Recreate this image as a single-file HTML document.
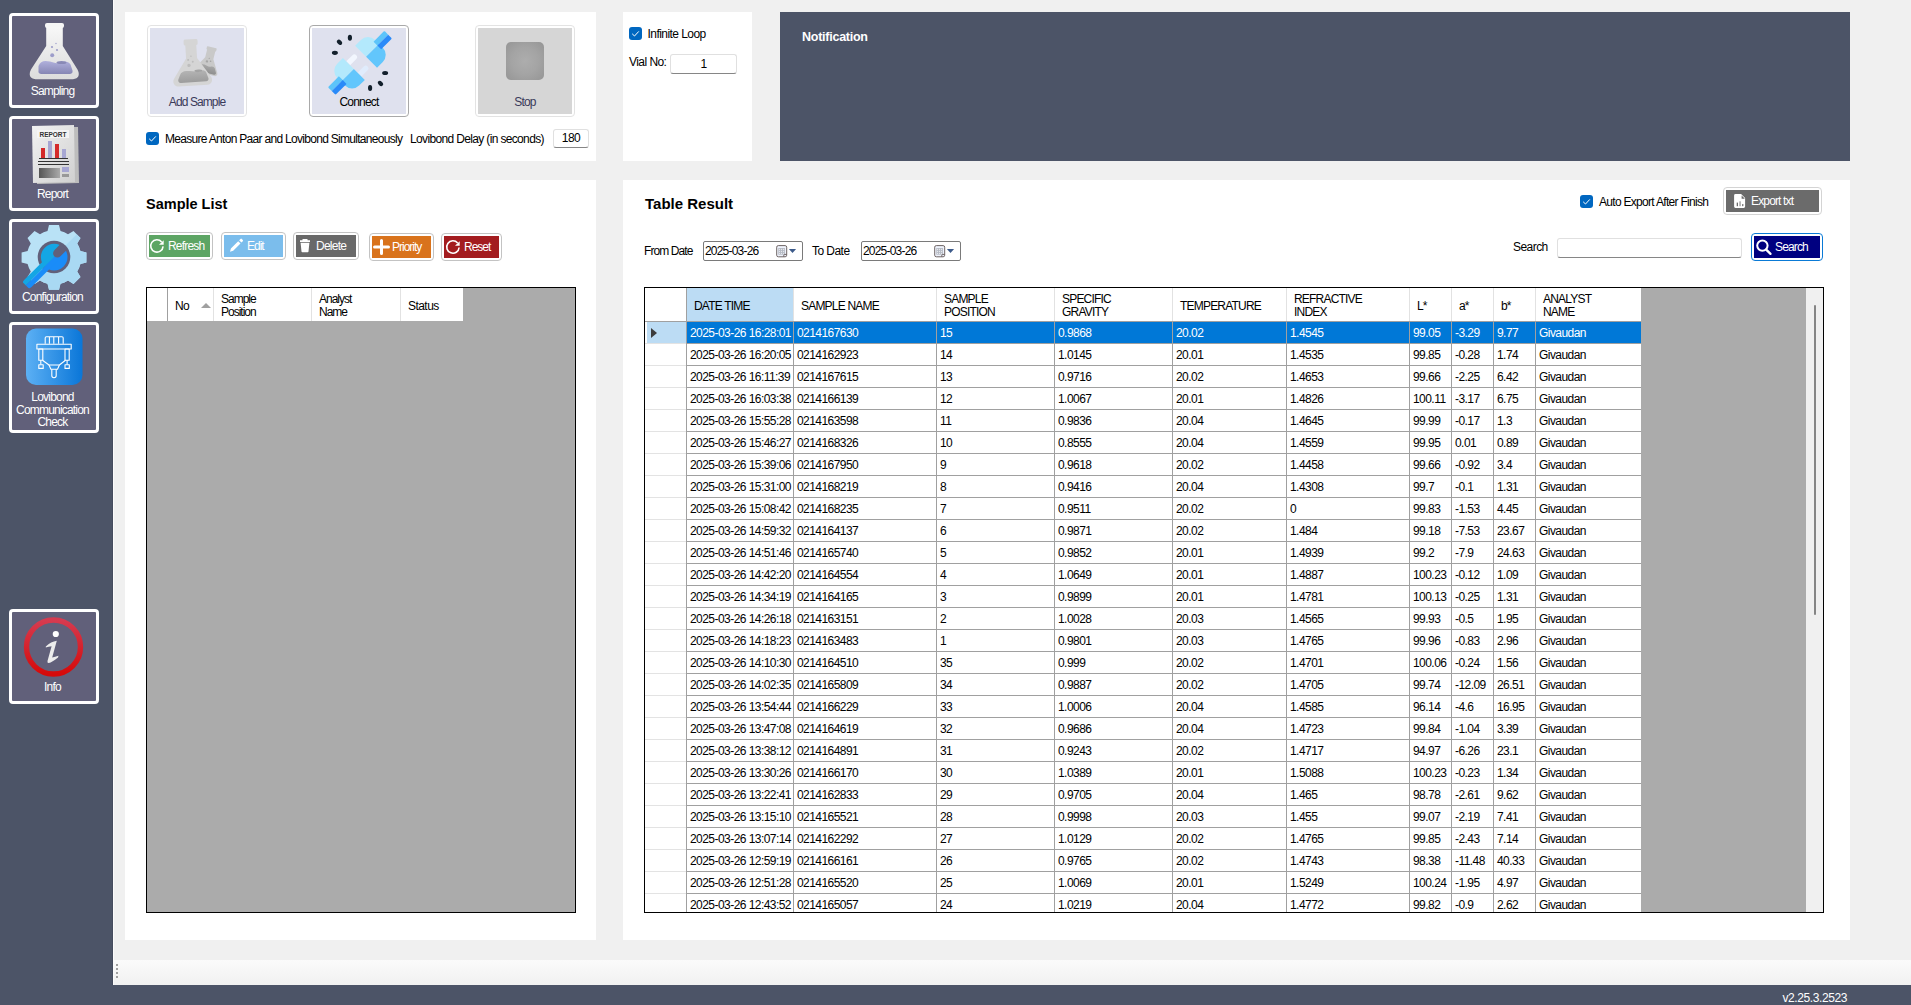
<!DOCTYPE html>
<html><head><meta charset="utf-8">
<style>
*{margin:0;padding:0;box-sizing:content-box}
html,body{width:1911px;height:1005px;overflow:hidden;background:#f0f0f0;font-family:"Liberation Sans",sans-serif;font-size:12px;color:#000}
.a{position:absolute}
.t{font-size:12px;line-height:14px;white-space:nowrap;letter-spacing:-0.55px}
.hd2{line-height:13px}
.sbtn{position:absolute;left:9px;width:84px;border:3px solid #fff;border-radius:4px;background:#61607a}
.sl{position:absolute;left:-1.5px;width:84px;text-align:center;color:#fff;font-size:12px;line-height:13px;letter-spacing:-0.8px;white-space:nowrap}
.panel{position:absolute;background:#fff}
.cb{position:absolute;width:13px;height:13px;background:#0067c0;border-radius:3px}
.cb svg{position:absolute;left:0;top:0}
.bigbtn{position:absolute;border:1px solid #e3e3e3;border-radius:4px;background:#fff}
.bigbtn .in{position:absolute;left:2px;top:2px;right:2px;bottom:2px;background:#dfe1ee}
.cbtn{position:absolute;border:1px solid #c3c3c3;border-radius:4px;background:#fff}
.cbtn .in{position:absolute;left:2px;top:2px;right:2px;bottom:2px}
.wt{color:#fff}
.tb{position:absolute;background:#fff;border:1px solid #e0e0e0;border-bottom:1px solid #868686;border-radius:3px}
</style></head>
<body>
<!-- sidebar -->
<div class="a" style="left:0;top:0;width:113px;height:1005px;background:#4c5467"></div>
<div class="a" style="left:112px;top:0;width:1px;height:985px;background:#454c5e"></div>
<div class="a" style="left:113px;top:0;width:1px;height:985px;background:#fbfbfb"></div>

<div class="sbtn" style="top:13px;height:89px">
  <svg class="a" style="left:0;top:0" width="84" height="89" viewBox="0 0 84 89">
    <defs>
      <linearGradient id="flg" x1="0" y1="0" x2="0" y2="1"><stop offset="0" stop-color="#f7f7f7"/><stop offset="1" stop-color="#dcdcdc"/></linearGradient>
      <linearGradient id="lq" x1="0" y1="0" x2="0" y2="1"><stop offset="0" stop-color="#b0b0dc"/><stop offset="1" stop-color="#8686b4"/></linearGradient>
    </defs>
    <rect x="33" y="7" width="19" height="5" rx="2" fill="#f6f6f6"/>
    <path d="M34.2 11 H50.8 V30 L65.5 53.5 Q69.5 62 61 63.3 H23.5 Q15 62 19 53.5 L34.2 30Z" fill="url(#flg)"/>
    <path d="M26.5 50 q2 -5 7 -5 q5 0 8 1.5 q4 1.5 7 0 q4 -1.5 7 -0.5 q2 0.5 3 2.5 l2 6 a3 3 0 0 1 -2.5 3.5 h-29 a3 3 0 0 1 -2.5 -3.5z" fill="url(#lq)"/>
    <ellipse cx="49.5" cy="46.5" rx="5" ry="1.6" fill="#8989b6"/>
    <circle cx="40.2" cy="39.3" r="2" fill="#9d9dca"/><circle cx="40" cy="31" r="1.1" fill="#9d9dca"/><circle cx="45" cy="34" r="1.1" fill="#9d9dca"/><circle cx="44" cy="27.5" r=".7" fill="#9d9dca"/>
  </svg>
  <div class="sl" style="top:69px">Sampling</div>
</div>
<div class="sbtn" style="top:116px;height:89px">
  <svg class="a" style="left:0;top:0" width="84" height="89" viewBox="0 0 84 89">
    <defs><linearGradient id="pg" x1="0" y1="0" x2="1" y2="1"><stop offset="0" stop-color="#f2f2f2"/><stop offset="1" stop-color="#d0d0d0"/></linearGradient>
    <linearGradient id="gb" x1="0" y1="0" x2="1" y2="0"><stop offset="0" stop-color="#555"/><stop offset="1" stop-color="#aaa"/></linearGradient></defs>
    <path d="M24 8 l42 0 l1 56 l-42 1z" fill="#bdbdbd"/>
    <path d="M20 7 l42 -1 l1 57 l-42 1z" fill="url(#pg)"/>
    <rect x="25" y="11" width="32" height="8" fill="#f4f4f4"/>
    <text x="41" y="18" font-family="Liberation Sans" font-weight="bold" font-size="6.5" text-anchor="middle" fill="#333">REPORT</text>
    <rect x="29" y="29" width="4" height="10" fill="#d42a2a"/><rect x="36" y="22" width="4" height="17" fill="#a6a6d2"/>
    <rect x="43" y="25" width="4" height="14" fill="#d42a2a"/><rect x="50" y="30" width="4" height="9" fill="#a6a6d2"/>
    <rect x="27" y="39" width="29" height="1" fill="#333"/><rect x="26" y="42" width="31" height="1" fill="#333"/><rect x="26" y="45" width="31" height="1" fill="#333"/>
    <rect x="27" y="49" width="21" height="10" fill="url(#gb)"/><rect x="50" y="48" width="7" height="5" fill="#a6a6d2"/><rect x="50" y="55" width="7" height="3" fill="#999"/>
  </svg>
  <div class="sl" style="top:69px">Report</div>
</div>
<div class="sbtn" style="top:219px;height:89px">
  <svg class="a" style="left:0;top:0" width="84" height="89" viewBox="0 0 84 89">
    <defs><clipPath id="cpl"><rect x="-40" y="-80" width="80" height="80"/></clipPath><clipPath id="cpr"><rect x="-40" y="0" width="80" height="80"/></clipPath></defs>
    <g transform="translate(42 35)">
      <path id="gear" d="M-5 -32 h10 l1.5 6 a26 26 0 0 1 7.5 3.2 l5.5 -3.3 l7 7 l-3.3 5.5 a26 26 0 0 1 3.2 7.5 l6 1.5 v10 l-6 1.5 a26 26 0 0 1 -3.2 7.5 l3.3 5.5 l-7 7 l-5.5 -3.3 a26 26 0 0 1 -7.5 3.2 l-1.5 6 h-10 l-1.5 -6 a26 26 0 0 1 -7.5 -3.2 l-5.5 3.3 l-7 -7 l3.3 -5.5 a26 26 0 0 1 -3.2 -7.5 l-6 -1.5 v-10 l6 -1.5 a26 26 0 0 1 3.2 -7.5 l-3.3 -5.5 l7 -7 l5.5 3.3 a26 26 0 0 1 7.5 -3.2z" fill="#b9e2f6"/>
      <g transform="rotate(-45)" clip-path="url(#cpr)"><path d="M-5 -32 h10 l1.5 6 a26 26 0 0 1 7.5 3.2 l5.5 -3.3 l7 7 l-3.3 5.5 a26 26 0 0 1 3.2 7.5 l6 1.5 v10 l-6 1.5 a26 26 0 0 1 -3.2 7.5 l3.3 5.5 l-7 7 l-5.5 -3.3 a26 26 0 0 1 -7.5 3.2 l-1.5 6 h-10 l-1.5 -6 a26 26 0 0 1 -7.5 -3.2 l-5.5 3.3 l-7 -7 l3.3 -5.5 a26 26 0 0 1 -3.2 -7.5 l-6 -1.5 v-10 l6 -1.5 a26 26 0 0 1 3.2 -7.5 l-3.3 -5.5 l7 -7 l5.5 3.3 a26 26 0 0 1 7.5 -3.2z" fill="#a9d9f3" transform="rotate(45)"/></g>
      <circle r="16.3" fill="#61607a"/>
      <g transform="translate(0.2 0.1) rotate(-45)">
        <g clip-path="url(#cpl)" fill="#14a6e4"><circle r="13.3"/><path d="M0 -5 H-37.5 A5 5 0 0 0 -37.5 5 H0z"/></g>
        <g clip-path="url(#cpr)" fill="#1a8cf8"><circle r="13.3"/><path d="M0 -5 H-37.5 A5 5 0 0 0 -37.5 5 H0z"/></g>
        <path d="M14 -4.8 H5 A4.3 4.3 0 0 0 5 3.8 H14z" fill="#61607a"/>
      </g>
    </g>
  </svg>
  <div class="sl" style="top:69px">Configuration</div>
</div>
<div class="sbtn" style="top:322px;height:105px">
  <svg class="a" style="left:0;top:0" width="84" height="70" viewBox="0 0 84 70">
    <defs><linearGradient id="lb" x1="0" y1="0" x2="1" y2="0"><stop offset="0" stop-color="#5cb0f4"/><stop offset="1" stop-color="#0a76d8"/></linearGradient></defs>
    <rect x="14" y="3.5" width="56.5" height="56.5" rx="10" fill="url(#lb)"/>
    <g fill="none" stroke="#fff" stroke-width="1.1" stroke-linejoin="round">
      <path d="M33.2 18.8 V13 a1.2 1.2 0 0 1 1.2 -1.2 H50 a1.2 1.2 0 0 1 1.2 1.2 V18.8"/>
      <path d="M37.4 12 V18.8 M41.8 12 V18.8 M46.6 12 V18.8"/>
      <rect x="24.9" y="19.3" width="34.3" height="4.7"/>
      <rect x="26.8" y="24" width="4" height="11.2"/>
      <rect x="53" y="24" width="4.2" height="11.2"/>
      <path d="M30.5 35.3 L37 40 H47.4 L53.5 35.3"/>
      <path d="M37 40 L38.9 44.2 H45.5 L47.4 40"/>
      <path d="M39.8 44.2 V50.5 a2.2 2.2 0 0 0 4.4 0 V44.2"/>
      <path d="M28.8 35.2 V39.5 M55.1 35.2 V39.5"/>
      <rect x="26.8" y="39.7" width="4.4" height="3.7"/>
      <rect x="53" y="39.7" width="4.3" height="3.7"/>
    </g>
  </svg>
  <div class="sl" style="top:66px">Lovibond</div>
  <div class="sl" style="top:78.5px">Communication</div>
  <div class="sl" style="top:91px">Check</div>
</div>
<div class="sbtn" style="top:609px;height:89px">
  <svg class="a" style="left:0;top:0" width="84" height="89" viewBox="0 0 84 89">
    <defs><linearGradient id="rg" x1="0" y1="0" x2="0" y2="1"><stop offset="0" stop-color="#d63b50"/><stop offset="1" stop-color="#d50a0a"/></linearGradient></defs>
    <circle cx="41.5" cy="35" r="27" fill="none" stroke="url(#rg)" stroke-width="5.4"/>
    <circle cx="43.8" cy="22" r="3.1" fill="#fff"/>
    <path d="M33.8 34.6 Q39 29.5 44.8 28.8 L40.2 45.5 Q43 45 46.5 43.7 L46 45.6 Q40 50.5 36.8 51 Q35 51.2 35.5 49 L39.6 34.2 Q36.5 34.5 33.8 35.4z" fill="#ececec"/>
  </svg>
  <div class="sl" style="top:69px">Info</div>
</div>

<!-- bottom bar -->
<div class="a" style="left:0;top:985px;width:1911px;height:20px;background:#4c5467"></div>
<div class="a wt" style="left:1782.5px;top:991px;font-size:12px;line-height:14px;letter-spacing:-0.4px">v2.25.3.2523</div>
<!-- status strip -->
<div class="a" style="left:114px;top:960px;width:1797px;height:25px;background:linear-gradient(#fbfbfb,#f1f1f1)"></div>
<div class="a" style="left:116px;top:964px;width:2px;height:2px;background:#a0a0a0"></div>
<div class="a" style="left:116px;top:968px;width:2px;height:2px;background:#a0a0a0"></div>
<div class="a" style="left:116px;top:972px;width:2px;height:2px;background:#a0a0a0"></div>
<div class="a" style="left:116px;top:976px;width:2px;height:2px;background:#a0a0a0"></div>

<!-- top-left panel -->
<div class="panel" style="left:125px;top:12px;width:471px;height:149px"></div>
<div class="bigbtn" style="left:147px;top:25px;width:98px;height:90px"><div class="in"></div>
  <svg class="a" style="left:0;top:0" width="98" height="90" viewBox="0 0 98 90">
    <defs><linearGradient id="lq2" x1="0" y1="0" x2="0" y2="1"><stop offset="0" stop-color="#b4b4b4"/><stop offset="1" stop-color="#9c9c9c"/></linearGradient>
    <linearGradient id="lq3" x1="0" y1="0" x2="0" y2="1"><stop offset="0" stop-color="#a8a8a8"/><stop offset="1" stop-color="#8f8f8f"/></linearGradient></defs>
    <g transform="translate(64 21.2) rotate(14)">
      <path d="M-5 0.8 A0.8 0.8 0 0 1 -4.2 0 H4.2 A0.8 0.8 0 0 1 5 0.8 V2.5 A0.8 0.8 0 0 1 4.2 3.3 V11.3 L11.4 23.8 A2.5 2.5 0 0 1 9.2 27.5 H-9.2 A2.5 2.5 0 0 1 -11.4 23.8 L-4.2 11.3 V3.3 A0.8 0.8 0 0 1 -5 2.5Z" fill="#c9c9c9"/>
      <path d="M-7.5 19.5 Q-4 18 -1 19 Q2 20 4 19 Q6.5 18 7.8 19.8 L10 23.8 A1.6 1.6 0 0 1 8.6 26.2 H-8.6 A1.6 1.6 0 0 1 -10 23.8 Z" fill="url(#lq3)"/>
      <circle cx="-1.5" cy="15" r="1.2" fill="#a5a5a5"/><circle cx="2" cy="14" r=".8" fill="#a5a5a5"/><circle cx="0" cy="11.5" r=".6" fill="#a5a5a5"/>
    </g>
    <g transform="translate(0 -0.8) rotate(-3.5 44 40)">
      <path d="M37 15.5 A1.5 1.5 0 0 1 38.5 14 H49.5 A1.5 1.5 0 0 1 51 15.5 V18.5 A1.5 1.5 0 0 1 49.5 20 V33 L62.5 53 A5 5 0 0 1 58.3 60.5 H29.2 A5 5 0 0 1 25 53 L38.5 33 V20 A1.5 1.5 0 0 1 37 18.5 Z" fill="#d5d5d5"/>
      <path d="M31.5 49 Q33 45.5 38 45.5 Q44 45.5 47 46.5 Q50.5 47.5 53 46 Q56 45 57.5 47.5 L59.5 53.5 A2.5 2.5 0 0 1 57.2 57 H31.8 A2.5 2.5 0 0 1 29.5 53.5 Z" fill="url(#lq2)"/>
      <ellipse cx="50" cy="46" rx="4" ry="1.3" fill="#a3a3a3"/>
      <circle cx="41" cy="40" r="1.7" fill="#bdbdbd"/><circle cx="40.5" cy="34.5" r="1" fill="#bdbdbd"/><circle cx="45" cy="36.5" r="1" fill="#bdbdbd"/><circle cx="43.5" cy="31" r=".7" fill="#bdbdbd"/>
    </g>
  </svg>
  <div class="a t" style="left:0;width:98px;text-align:center;top:69px;color:#3a3a5a;letter-spacing:-0.9px">Add Sample</div>
</div>
<div class="bigbtn" style="left:309px;top:25px;width:98px;height:90px;border-color:#a9a9a9"><div class="in"></div>
  <svg class="a" style="left:0;top:0" width="98" height="90" viewBox="0 0 98 90">
    <g fill="#13202c">
      <ellipse cx="39.9" cy="11.8" rx="2.1" ry="3"/>
      <ellipse cx="29.5" cy="16.3" rx="2.1" ry="3" transform="rotate(-45 29.5 16.3)"/>
      <ellipse cx="24.9" cy="26.8" rx="3" ry="2.1"/>
      <ellipse cx="75.1" cy="47" rx="3" ry="2.1"/>
      <ellipse cx="70.5" cy="57.4" rx="2.1" ry="3" transform="rotate(-45 70.5 57.4)"/>
      <ellipse cx="60.1" cy="61.9" rx="2.1" ry="3"/>
    </g>
    <g transform="translate(11 1) rotate(-45) translate(0 52.9)">
      <path d="M10.85 -15.5 H19 A10 10 0 0 1 29 -5.5 V0 H10.85z" fill="#b3e9fc"/>
      <path d="M10.85 15.5 H19 A10 10 0 0 0 29 5.5 V0 H10.85z" fill="#62c6fc"/>
      <path d="M26.8 -5.4 H41 a1.1 1.1 0 0 1 1.1 1.1 V0 H26.8z" fill="#5cc4fa"/>
      <path d="M26.8 5.4 H41 a1.1 1.1 0 0 0 1.1 -1.1 V0 H26.8z" fill="#2a8af8"/>
      <path d="M-6.4 -10.7 H2.3 a2.7 2.7 0 0 1 0 5.4 H-6.4z" fill="#f2f6fe"/>
      <path d="M-6.4 5.3 H2.3 a2.7 2.7 0 0 1 0 5.4 H-6.4z" fill="#e0ecfc"/>
      <path d="M-6.4 -15.5 H-14.5 A10 10 0 0 0 -24.5 -5.5 V0 H-6.4z" fill="#b3e9fc"/>
      <path d="M-6.4 15.5 H-14.5 A10 10 0 0 1 -24.5 5.5 V0 H-6.4z" fill="#62c6fc"/>
      <path d="M-22.2 -5.4 H-36.6 a1.1 1.1 0 0 0 -1.1 1.1 V0 H-22.2z" fill="#5cc4fa"/>
      <path d="M-22.2 5.4 H-36.6 a1.1 1.1 0 0 1 -1.1 -1.1 V0 H-22.2z" fill="#2a8af8"/>
    </g>
  </svg>
  <div class="a t" style="left:0;width:98px;text-align:center;top:68.5px;letter-spacing:-0.8px">Connect</div>
</div>
<div class="bigbtn" style="left:475px;top:25px;width:98px;height:90px"><div class="in" style="background:#d6d6d6"></div>
  <div class="a" style="left:30px;top:16px;width:38px;height:38px;border-radius:5px;background:radial-gradient(circle,#adadad 0%,#a4a4a4 50%,#959595 100%)"></div>
  <div class="a t" style="left:0;width:98px;text-align:center;top:68.5px;color:#3a3a5a;letter-spacing:-0.8px">Stop</div>
</div>
<div class="cb" style="left:146px;top:132px"><svg width="13" height="13"><path d="M3.2 6.8 l2.3 2.2 l4.3 -4.6" fill="none" stroke="#fff" stroke-width="1"/></svg></div>
<div class="a t" style="left:165px;top:132px;letter-spacing:-0.7px">Measure Anton Paar and Lovibond Simultaneously</div>
<div class="a t" style="left:410px;top:132px;letter-spacing:-0.65px">Lovibond Delay (in seconds)</div>
<div class="tb" style="left:553px;top:129px;width:34px;height:17px"></div>
<div class="a t" style="left:553px;width:36px;text-align:center;top:131px">180</div>

<!-- top-middle panel -->
<div class="panel" style="left:623px;top:12px;width:129px;height:149px"></div>
<div class="cb" style="left:629px;top:27px"><svg width="13" height="13"><path d="M3.2 6.8 l2.3 2.2 l4.3 -4.6" fill="none" stroke="#fff" stroke-width="1"/></svg></div>
<div class="a t" style="left:647.5px;top:27px">Infinite Loop</div>
<div class="a t" style="left:629px;top:55px">Vial No:</div>
<div class="tb" style="left:670px;top:54px;width:65px;height:18px"></div>
<div class="a t" style="left:670px;width:67px;text-align:center;top:57px">1</div>

<!-- notification -->
<div class="a" style="left:780px;top:12px;width:1070px;height:149px;background:#4c5467"></div>
<div class="a wt" style="left:802px;top:30px;font-weight:bold;font-size:12.5px;line-height:14px;letter-spacing:-0.25px">Notification</div>

<!-- sample list panel -->
<div class="panel" style="left:125px;top:180px;width:471px;height:760px"></div>
<div class="a" style="left:146px;top:196px;font-weight:bold;font-size:14.5px;line-height:16px;white-space:nowrap">Sample List</div>
<div class="cbtn" style="left:146px;top:232px;width:65px;height:26px"><div class="in" style="background:#5da564"></div></div>
<div class="cbtn" style="left:221px;top:232px;width:63px;height:26px"><div class="in" style="background:#7bbdec"></div></div>
<div class="cbtn" style="left:293px;top:232px;width:64px;height:26px"><div class="in" style="background:#696969"></div></div>
<div class="cbtn" style="left:369px;top:233px;width:63px;height:26px"><div class="in" style="background:#d9731c"></div></div>
<div class="cbtn" style="left:441px;top:233px;width:59px;height:26px"><div class="in" style="background:#a31c1f"></div></div>
<svg class="a" style="left:146px;top:232px" width="360" height="30" viewBox="0 0 360 30">
  <g fill="none" stroke="#fff" stroke-width="1.6">
    <path d="M17.1 14.4 A6.2 6.2 0 1 1 15.65 9.9"/>
    <path d="M313.1 15.5 A6.2 6.2 0 1 1 311.65 11"/>
  </g>
  <path d="M13 12.7 h4.7 v-4.5z" fill="#fff"/>
  <path d="M309 13.8 h4.7 v-4.5z" fill="#fff"/>
  <path d="M84 19.7 l0.9 -3.2 l7.3 -7.3 l2.3 2.3 l-7.3 7.3z M93.1 8.3 l1.4 -1.4 a0.9 0.9 0 0 1 1.3 0 l1 1 a0.9 0.9 0 0 1 0 1.3 l-1.4 1.4z" fill="#fff"/>
  <path d="M154 8.3 h10 v1.6 h-10z M157 7 h4 a0.6 0.6 0 0 1 0.6 0.6 v0.7 h-5.2 v-0.7 a0.6 0.6 0 0 1 0.6 -0.6z M154.6 10.7 h8.8 l-0.9 8.8 a0.8 0.8 0 0 1 -0.8 0.7 h-5.4 a0.8 0.8 0 0 1 -0.8 -0.7z" fill="#fff"/>
  <path d="M228.5 15 h14 M235.5 8.5 v13" stroke="#fff" stroke-width="3" stroke-linecap="round"/>
</svg>
<div class="a t wt" style="left:168px;top:239px;letter-spacing:-0.8px">Refresh</div>
<div class="a t wt" style="left:247px;top:239px;letter-spacing:-1px">Edit</div>
<div class="a t wt" style="left:316px;top:239px;letter-spacing:-0.75px">Delete</div>
<div class="a t wt" style="left:392px;top:240px;letter-spacing:-1px">Priority</div>
<div class="a t wt" style="left:464px;top:240px;letter-spacing:-1px">Reset</div>
<div style="position:absolute;left:146px;top:287px;width:428px;height:624px;border:1px solid #000;background:#ababab;overflow:hidden">
<div class="a" style="left:0;top:0;width:316px;height:33px;background:#fff"></div>
<div class="a" style="left:20px;top:0;width:1px;height:33px;background:#a0a0a0"></div>
<div class="a" style="left:66px;top:0;width:1px;height:33px;background:#e2e2e2"></div>
<div class="a" style="left:164px;top:0;width:1px;height:33px;background:#e2e2e2"></div>
<div class="a" style="left:253px;top:0;width:1px;height:33px;background:#e2e2e2"></div>
<div class="a t" style="left:28px;top:11px">No</div>
<div class="a" style="left:54px;top:15px;width:0;height:0;border-left:5px solid transparent;border-right:5px solid transparent;border-bottom:5px solid #a0a0a0"></div>
<div class="a t hd2" style="left:74px;top:5px;letter-spacing:-1px">Sample<br>Position</div>
<div class="a t hd2" style="left:172px;top:5px;letter-spacing:-1px">Analyst<br>Name</div>
<div class="a t" style="left:261px;top:11px">Status</div>
</div>

<!-- table result panel -->
<div class="panel" style="left:623px;top:180px;width:1227px;height:760px"></div>
<div class="a" style="left:645px;top:196px;font-weight:bold;font-size:15px;line-height:16px;white-space:nowrap">Table Result</div>
<div class="a t" style="left:644px;top:244px;letter-spacing:-0.9px">From Date</div>
<div class="a" style="left:703px;top:241px;width:98px;height:18px;border:1px solid #7a7a7a;border-radius:2px;background:#fff"></div>
<div class="a t" style="left:705px;top:244px;letter-spacing:-0.8px">2025-03-26</div>
<div class="a t" style="left:812px;top:244px">To Date</div>
<div class="a" style="left:861px;top:241px;width:98px;height:18px;border:1px solid #7a7a7a;border-radius:2px;background:#fff"></div>
<div class="a t" style="left:863px;top:244px;letter-spacing:-0.8px">2025-03-26</div>
<svg class="a" style="left:775px;top:244px" width="25" height="16"><rect x="1.7" y="1.6" width="10" height="11.2" rx="1.6" fill="#eef2fb" stroke="#6e6464" stroke-width="1"/><rect x="3.3" y="4" width="6.6" height="6.7" fill="#b5bac4"/><g fill="#fff"><circle cx="4.6" cy="5.3" r=".55"/><circle cx="6.6" cy="5.3" r=".55"/><circle cx="8.6" cy="5.3" r=".55"/><circle cx="4.6" cy="7.3" r=".55"/><circle cx="6.6" cy="7.3" r=".55"/><circle cx="8.6" cy="7.3" r=".55"/><circle cx="4.6" cy="9.3" r=".55"/><circle cx="6.6" cy="9.3" r=".55"/><circle cx="8.6" cy="9.3" r=".55"/></g><path d="M8.8 12.8 v-1.6 a0.8 0.8 0 0 1 0.8 -0.8 h2" fill="none" stroke="#6e6464" stroke-width="1"/><path d="M13.9 4.9 h7.2 l-3.6 4z" fill="#3c5a8a"/></svg>
<svg class="a" style="left:933px;top:244px" width="25" height="16"><rect x="1.7" y="1.6" width="10" height="11.2" rx="1.6" fill="#eef2fb" stroke="#6e6464" stroke-width="1"/><rect x="3.3" y="4" width="6.6" height="6.7" fill="#b5bac4"/><g fill="#fff"><circle cx="4.6" cy="5.3" r=".55"/><circle cx="6.6" cy="5.3" r=".55"/><circle cx="8.6" cy="5.3" r=".55"/><circle cx="4.6" cy="7.3" r=".55"/><circle cx="6.6" cy="7.3" r=".55"/><circle cx="8.6" cy="7.3" r=".55"/><circle cx="4.6" cy="9.3" r=".55"/><circle cx="6.6" cy="9.3" r=".55"/><circle cx="8.6" cy="9.3" r=".55"/></g><path d="M8.8 12.8 v-1.6 a0.8 0.8 0 0 1 0.8 -0.8 h2" fill="none" stroke="#6e6464" stroke-width="1"/><path d="M13.9 4.9 h7.2 l-3.6 4z" fill="#3c5a8a"/></svg>

<div class="cb" style="left:1580px;top:195px"><svg width="13" height="13"><path d="M3.2 6.8 l2.3 2.2 l4.3 -4.6" fill="none" stroke="#fff" stroke-width="1"/></svg></div>
<div class="a t" style="left:1599px;top:195px;letter-spacing:-0.7px">Auto Export After Finish</div>
<div class="cbtn" style="left:1723px;top:187px;width:97px;height:26px;border-color:#d4d4d4"><div class="in" style="background:#6b6b6b"></div></div>
<svg class="a" style="left:1734px;top:193px" width="14" height="16"><path d="M2.1 1 h5 l4 4 v8.5 a1.4 1.4 0 0 1 -1.4 1.4 h-8.2 a1.4 1.4 0 0 1 -1.4 -1.4 v-11.1 a1.4 1.4 0 0 1 1.4 -1.4z" fill="#fff"/><path d="M7.6 2.4 v3.3 h3.3z" fill="#6b6b6b"/><rect x="2.7" y="9.6" width="1.3" height="3.6" fill="#6b6b6b"/><rect x="5.4" y="8.3" width="1.3" height="4.9" fill="#9a9a9a"/><rect x="8.1" y="11" width="1.3" height="2.2" rx=".6" fill="#6b6b6b"/></svg>
<div class="a t wt" style="left:1751px;top:194px;letter-spacing:-0.85px">Export txt</div>

<div class="a t" style="left:1513px;top:240px">Search</div>
<div class="tb" style="left:1557px;top:238px;width:183px;height:18px"></div>
<div class="a" style="left:1751px;top:233px;width:70px;height:26px;border:1px solid #0a7ad6;border-radius:4px;background:#fff"></div>
<div class="a" style="left:1754px;top:236px;width:66px;height:22px;background:#000080"></div>
<svg class="a" style="left:1754px;top:238px" width="20" height="20"><circle cx="8.4" cy="7.6" r="5.2" fill="none" stroke="#fff" stroke-width="2"/><path d="M12.2 11.6 l4.3 4.3" stroke="#fff" stroke-width="2.3" stroke-linecap="round"/></svg>
<div class="a t wt" style="left:1775px;top:240px;letter-spacing:-0.85px">Search</div>
<div style="position:absolute;left:644px;top:287px;width:1178px;height:624px;border:1px solid #000;background:#ababab;overflow:hidden">
<div class="a" style="left:0;top:0;width:996px;height:33px;background:#fff"></div>
<div class="a" style="left:42px;top:0;width:106px;height:33px;background:#bcdcf4"></div>
<div class="a" style="left:0;top:34px;width:996px;height:594px;background:#fff"></div>
<div class="a" style="left:2px;top:34px;width:39px;height:22px;background:#bcdcf4"></div>
<div class="a" style="left:42px;top:34px;width:954px;height:21px;background:#0078d7"></div>
<div class="a" style="left:6px;top:40px;width:0;height:0;border-top:5px solid transparent;border-bottom:5px solid transparent;border-left:6px solid #3c3c3c"></div>
<div class="a" style="left:0;top:33px;width:996px;height:1px;background:#a0a0a0"></div>
<div class="a" style="left:0;top:55px;width:41px;height:1px;background:#e3e3e3"></div>
<div class="a" style="left:41px;top:55px;width:955px;height:1px;background:#a0a0a0"></div>
<div class="a" style="left:0;top:77px;width:41px;height:1px;background:#e3e3e3"></div>
<div class="a" style="left:41px;top:77px;width:955px;height:1px;background:#a0a0a0"></div>
<div class="a" style="left:0;top:99px;width:41px;height:1px;background:#e3e3e3"></div>
<div class="a" style="left:41px;top:99px;width:955px;height:1px;background:#a0a0a0"></div>
<div class="a" style="left:0;top:121px;width:41px;height:1px;background:#e3e3e3"></div>
<div class="a" style="left:41px;top:121px;width:955px;height:1px;background:#a0a0a0"></div>
<div class="a" style="left:0;top:143px;width:41px;height:1px;background:#e3e3e3"></div>
<div class="a" style="left:41px;top:143px;width:955px;height:1px;background:#a0a0a0"></div>
<div class="a" style="left:0;top:165px;width:41px;height:1px;background:#e3e3e3"></div>
<div class="a" style="left:41px;top:165px;width:955px;height:1px;background:#a0a0a0"></div>
<div class="a" style="left:0;top:187px;width:41px;height:1px;background:#e3e3e3"></div>
<div class="a" style="left:41px;top:187px;width:955px;height:1px;background:#a0a0a0"></div>
<div class="a" style="left:0;top:209px;width:41px;height:1px;background:#e3e3e3"></div>
<div class="a" style="left:41px;top:209px;width:955px;height:1px;background:#a0a0a0"></div>
<div class="a" style="left:0;top:231px;width:41px;height:1px;background:#e3e3e3"></div>
<div class="a" style="left:41px;top:231px;width:955px;height:1px;background:#a0a0a0"></div>
<div class="a" style="left:0;top:253px;width:41px;height:1px;background:#e3e3e3"></div>
<div class="a" style="left:41px;top:253px;width:955px;height:1px;background:#a0a0a0"></div>
<div class="a" style="left:0;top:275px;width:41px;height:1px;background:#e3e3e3"></div>
<div class="a" style="left:41px;top:275px;width:955px;height:1px;background:#a0a0a0"></div>
<div class="a" style="left:0;top:297px;width:41px;height:1px;background:#e3e3e3"></div>
<div class="a" style="left:41px;top:297px;width:955px;height:1px;background:#a0a0a0"></div>
<div class="a" style="left:0;top:319px;width:41px;height:1px;background:#e3e3e3"></div>
<div class="a" style="left:41px;top:319px;width:955px;height:1px;background:#a0a0a0"></div>
<div class="a" style="left:0;top:341px;width:41px;height:1px;background:#e3e3e3"></div>
<div class="a" style="left:41px;top:341px;width:955px;height:1px;background:#a0a0a0"></div>
<div class="a" style="left:0;top:363px;width:41px;height:1px;background:#e3e3e3"></div>
<div class="a" style="left:41px;top:363px;width:955px;height:1px;background:#a0a0a0"></div>
<div class="a" style="left:0;top:385px;width:41px;height:1px;background:#e3e3e3"></div>
<div class="a" style="left:41px;top:385px;width:955px;height:1px;background:#a0a0a0"></div>
<div class="a" style="left:0;top:407px;width:41px;height:1px;background:#e3e3e3"></div>
<div class="a" style="left:41px;top:407px;width:955px;height:1px;background:#a0a0a0"></div>
<div class="a" style="left:0;top:429px;width:41px;height:1px;background:#e3e3e3"></div>
<div class="a" style="left:41px;top:429px;width:955px;height:1px;background:#a0a0a0"></div>
<div class="a" style="left:0;top:451px;width:41px;height:1px;background:#e3e3e3"></div>
<div class="a" style="left:41px;top:451px;width:955px;height:1px;background:#a0a0a0"></div>
<div class="a" style="left:0;top:473px;width:41px;height:1px;background:#e3e3e3"></div>
<div class="a" style="left:41px;top:473px;width:955px;height:1px;background:#a0a0a0"></div>
<div class="a" style="left:0;top:495px;width:41px;height:1px;background:#e3e3e3"></div>
<div class="a" style="left:41px;top:495px;width:955px;height:1px;background:#a0a0a0"></div>
<div class="a" style="left:0;top:517px;width:41px;height:1px;background:#e3e3e3"></div>
<div class="a" style="left:41px;top:517px;width:955px;height:1px;background:#a0a0a0"></div>
<div class="a" style="left:0;top:539px;width:41px;height:1px;background:#e3e3e3"></div>
<div class="a" style="left:41px;top:539px;width:955px;height:1px;background:#a0a0a0"></div>
<div class="a" style="left:0;top:561px;width:41px;height:1px;background:#e3e3e3"></div>
<div class="a" style="left:41px;top:561px;width:955px;height:1px;background:#a0a0a0"></div>
<div class="a" style="left:0;top:583px;width:41px;height:1px;background:#e3e3e3"></div>
<div class="a" style="left:41px;top:583px;width:955px;height:1px;background:#a0a0a0"></div>
<div class="a" style="left:0;top:605px;width:41px;height:1px;background:#e3e3e3"></div>
<div class="a" style="left:41px;top:605px;width:955px;height:1px;background:#a0a0a0"></div>
<div class="a" style="left:0;top:627px;width:41px;height:1px;background:#e3e3e3"></div>
<div class="a" style="left:41px;top:627px;width:955px;height:1px;background:#a0a0a0"></div>
<div class="a" style="left:41px;top:0;width:1px;height:624px;background:#a0a0a0"></div>
<div class="a" style="left:148px;top:0;width:1px;height:33px;background:#e2e2e2"></div>
<div class="a" style="left:148px;top:34px;width:1px;height:590px;background:#a0a0a0"></div>
<div class="a" style="left:291px;top:0;width:1px;height:33px;background:#e2e2e2"></div>
<div class="a" style="left:291px;top:34px;width:1px;height:590px;background:#a0a0a0"></div>
<div class="a" style="left:409px;top:0;width:1px;height:33px;background:#e2e2e2"></div>
<div class="a" style="left:409px;top:34px;width:1px;height:590px;background:#a0a0a0"></div>
<div class="a" style="left:527px;top:0;width:1px;height:33px;background:#e2e2e2"></div>
<div class="a" style="left:527px;top:34px;width:1px;height:590px;background:#a0a0a0"></div>
<div class="a" style="left:641px;top:0;width:1px;height:33px;background:#e2e2e2"></div>
<div class="a" style="left:641px;top:34px;width:1px;height:590px;background:#a0a0a0"></div>
<div class="a" style="left:764px;top:0;width:1px;height:33px;background:#e2e2e2"></div>
<div class="a" style="left:764px;top:34px;width:1px;height:590px;background:#a0a0a0"></div>
<div class="a" style="left:806px;top:0;width:1px;height:33px;background:#e2e2e2"></div>
<div class="a" style="left:806px;top:34px;width:1px;height:590px;background:#a0a0a0"></div>
<div class="a" style="left:848px;top:0;width:1px;height:33px;background:#e2e2e2"></div>
<div class="a" style="left:848px;top:34px;width:1px;height:590px;background:#a0a0a0"></div>
<div class="a" style="left:890px;top:0;width:1px;height:33px;background:#e2e2e2"></div>
<div class="a" style="left:890px;top:34px;width:1px;height:590px;background:#a0a0a0"></div>
<div class="a t" style="left:49px;top:11px;letter-spacing:-0.8px">DATE TIME</div>
<div class="a t" style="left:156px;top:11px;letter-spacing:-0.8px">SAMPLE NAME</div>
<div class="a t hd2" style="left:299px;top:5px;letter-spacing:-0.8px">SAMPLE<br>POSITION</div>
<div class="a t hd2" style="left:417px;top:5px;letter-spacing:-0.8px">SPECIFIC<br>GRAVITY</div>
<div class="a t" style="left:535px;top:11px;letter-spacing:-0.8px">TEMPERATURE</div>
<div class="a t hd2" style="left:649px;top:5px;letter-spacing:-0.8px">REFRACTIVE<br>INDEX</div>
<div class="a t" style="left:772px;top:11px;letter-spacing:-0.8px">L*</div>
<div class="a t" style="left:814px;top:11px;letter-spacing:-0.8px">a*</div>
<div class="a t" style="left:856px;top:11px;letter-spacing:-0.8px">b*</div>
<div class="a t hd2" style="left:898px;top:5px;letter-spacing:-0.8px">ANALYST<br>NAME</div>
<div class="a t" style="left:45px;top:38px;color:#fff">2025-03-26 16:28:01</div>
<div class="a t" style="left:152px;top:38px;color:#fff">0214167630</div>
<div class="a t" style="left:295px;top:38px;color:#fff">15</div>
<div class="a t" style="left:413px;top:38px;color:#fff">0.9868</div>
<div class="a t" style="left:531px;top:38px;color:#fff">20.02</div>
<div class="a t" style="left:645px;top:38px;color:#fff">1.4545</div>
<div class="a t" style="left:768px;top:38px;color:#fff">99.05</div>
<div class="a t" style="left:810px;top:38px;color:#fff">-3.29</div>
<div class="a t" style="left:852px;top:38px;color:#fff">9.77</div>
<div class="a t" style="left:894px;top:38px;color:#fff">Givaudan</div>
<div class="a t" style="left:45px;top:60px;color:#000">2025-03-26 16:20:05</div>
<div class="a t" style="left:152px;top:60px;color:#000">0214162923</div>
<div class="a t" style="left:295px;top:60px;color:#000">14</div>
<div class="a t" style="left:413px;top:60px;color:#000">1.0145</div>
<div class="a t" style="left:531px;top:60px;color:#000">20.01</div>
<div class="a t" style="left:645px;top:60px;color:#000">1.4535</div>
<div class="a t" style="left:768px;top:60px;color:#000">99.85</div>
<div class="a t" style="left:810px;top:60px;color:#000">-0.28</div>
<div class="a t" style="left:852px;top:60px;color:#000">1.74</div>
<div class="a t" style="left:894px;top:60px;color:#000">Givaudan</div>
<div class="a t" style="left:45px;top:82px;color:#000">2025-03-26 16:11:39</div>
<div class="a t" style="left:152px;top:82px;color:#000">0214167615</div>
<div class="a t" style="left:295px;top:82px;color:#000">13</div>
<div class="a t" style="left:413px;top:82px;color:#000">0.9716</div>
<div class="a t" style="left:531px;top:82px;color:#000">20.02</div>
<div class="a t" style="left:645px;top:82px;color:#000">1.4653</div>
<div class="a t" style="left:768px;top:82px;color:#000">99.66</div>
<div class="a t" style="left:810px;top:82px;color:#000">-2.25</div>
<div class="a t" style="left:852px;top:82px;color:#000">6.42</div>
<div class="a t" style="left:894px;top:82px;color:#000">Givaudan</div>
<div class="a t" style="left:45px;top:104px;color:#000">2025-03-26 16:03:38</div>
<div class="a t" style="left:152px;top:104px;color:#000">0214166139</div>
<div class="a t" style="left:295px;top:104px;color:#000">12</div>
<div class="a t" style="left:413px;top:104px;color:#000">1.0067</div>
<div class="a t" style="left:531px;top:104px;color:#000">20.01</div>
<div class="a t" style="left:645px;top:104px;color:#000">1.4826</div>
<div class="a t" style="left:768px;top:104px;color:#000">100.11</div>
<div class="a t" style="left:810px;top:104px;color:#000">-3.17</div>
<div class="a t" style="left:852px;top:104px;color:#000">6.75</div>
<div class="a t" style="left:894px;top:104px;color:#000">Givaudan</div>
<div class="a t" style="left:45px;top:126px;color:#000">2025-03-26 15:55:28</div>
<div class="a t" style="left:152px;top:126px;color:#000">0214163598</div>
<div class="a t" style="left:295px;top:126px;color:#000">11</div>
<div class="a t" style="left:413px;top:126px;color:#000">0.9836</div>
<div class="a t" style="left:531px;top:126px;color:#000">20.04</div>
<div class="a t" style="left:645px;top:126px;color:#000">1.4645</div>
<div class="a t" style="left:768px;top:126px;color:#000">99.99</div>
<div class="a t" style="left:810px;top:126px;color:#000">-0.17</div>
<div class="a t" style="left:852px;top:126px;color:#000">1.3</div>
<div class="a t" style="left:894px;top:126px;color:#000">Givaudan</div>
<div class="a t" style="left:45px;top:148px;color:#000">2025-03-26 15:46:27</div>
<div class="a t" style="left:152px;top:148px;color:#000">0214168326</div>
<div class="a t" style="left:295px;top:148px;color:#000">10</div>
<div class="a t" style="left:413px;top:148px;color:#000">0.8555</div>
<div class="a t" style="left:531px;top:148px;color:#000">20.04</div>
<div class="a t" style="left:645px;top:148px;color:#000">1.4559</div>
<div class="a t" style="left:768px;top:148px;color:#000">99.95</div>
<div class="a t" style="left:810px;top:148px;color:#000">0.01</div>
<div class="a t" style="left:852px;top:148px;color:#000">0.89</div>
<div class="a t" style="left:894px;top:148px;color:#000">Givaudan</div>
<div class="a t" style="left:45px;top:170px;color:#000">2025-03-26 15:39:06</div>
<div class="a t" style="left:152px;top:170px;color:#000">0214167950</div>
<div class="a t" style="left:295px;top:170px;color:#000">9</div>
<div class="a t" style="left:413px;top:170px;color:#000">0.9618</div>
<div class="a t" style="left:531px;top:170px;color:#000">20.02</div>
<div class="a t" style="left:645px;top:170px;color:#000">1.4458</div>
<div class="a t" style="left:768px;top:170px;color:#000">99.66</div>
<div class="a t" style="left:810px;top:170px;color:#000">-0.92</div>
<div class="a t" style="left:852px;top:170px;color:#000">3.4</div>
<div class="a t" style="left:894px;top:170px;color:#000">Givaudan</div>
<div class="a t" style="left:45px;top:192px;color:#000">2025-03-26 15:31:00</div>
<div class="a t" style="left:152px;top:192px;color:#000">0214168219</div>
<div class="a t" style="left:295px;top:192px;color:#000">8</div>
<div class="a t" style="left:413px;top:192px;color:#000">0.9416</div>
<div class="a t" style="left:531px;top:192px;color:#000">20.04</div>
<div class="a t" style="left:645px;top:192px;color:#000">1.4308</div>
<div class="a t" style="left:768px;top:192px;color:#000">99.7</div>
<div class="a t" style="left:810px;top:192px;color:#000">-0.1</div>
<div class="a t" style="left:852px;top:192px;color:#000">1.31</div>
<div class="a t" style="left:894px;top:192px;color:#000">Givaudan</div>
<div class="a t" style="left:45px;top:214px;color:#000">2025-03-26 15:08:42</div>
<div class="a t" style="left:152px;top:214px;color:#000">0214168235</div>
<div class="a t" style="left:295px;top:214px;color:#000">7</div>
<div class="a t" style="left:413px;top:214px;color:#000">0.9511</div>
<div class="a t" style="left:531px;top:214px;color:#000">20.02</div>
<div class="a t" style="left:645px;top:214px;color:#000">0</div>
<div class="a t" style="left:768px;top:214px;color:#000">99.83</div>
<div class="a t" style="left:810px;top:214px;color:#000">-1.53</div>
<div class="a t" style="left:852px;top:214px;color:#000">4.45</div>
<div class="a t" style="left:894px;top:214px;color:#000">Givaudan</div>
<div class="a t" style="left:45px;top:236px;color:#000">2025-03-26 14:59:32</div>
<div class="a t" style="left:152px;top:236px;color:#000">0214164137</div>
<div class="a t" style="left:295px;top:236px;color:#000">6</div>
<div class="a t" style="left:413px;top:236px;color:#000">0.9871</div>
<div class="a t" style="left:531px;top:236px;color:#000">20.02</div>
<div class="a t" style="left:645px;top:236px;color:#000">1.484</div>
<div class="a t" style="left:768px;top:236px;color:#000">99.18</div>
<div class="a t" style="left:810px;top:236px;color:#000">-7.53</div>
<div class="a t" style="left:852px;top:236px;color:#000">23.67</div>
<div class="a t" style="left:894px;top:236px;color:#000">Givaudan</div>
<div class="a t" style="left:45px;top:258px;color:#000">2025-03-26 14:51:46</div>
<div class="a t" style="left:152px;top:258px;color:#000">0214165740</div>
<div class="a t" style="left:295px;top:258px;color:#000">5</div>
<div class="a t" style="left:413px;top:258px;color:#000">0.9852</div>
<div class="a t" style="left:531px;top:258px;color:#000">20.01</div>
<div class="a t" style="left:645px;top:258px;color:#000">1.4939</div>
<div class="a t" style="left:768px;top:258px;color:#000">99.2</div>
<div class="a t" style="left:810px;top:258px;color:#000">-7.9</div>
<div class="a t" style="left:852px;top:258px;color:#000">24.63</div>
<div class="a t" style="left:894px;top:258px;color:#000">Givaudan</div>
<div class="a t" style="left:45px;top:280px;color:#000">2025-03-26 14:42:20</div>
<div class="a t" style="left:152px;top:280px;color:#000">0214164554</div>
<div class="a t" style="left:295px;top:280px;color:#000">4</div>
<div class="a t" style="left:413px;top:280px;color:#000">1.0649</div>
<div class="a t" style="left:531px;top:280px;color:#000">20.01</div>
<div class="a t" style="left:645px;top:280px;color:#000">1.4887</div>
<div class="a t" style="left:768px;top:280px;color:#000">100.23</div>
<div class="a t" style="left:810px;top:280px;color:#000">-0.12</div>
<div class="a t" style="left:852px;top:280px;color:#000">1.09</div>
<div class="a t" style="left:894px;top:280px;color:#000">Givaudan</div>
<div class="a t" style="left:45px;top:302px;color:#000">2025-03-26 14:34:19</div>
<div class="a t" style="left:152px;top:302px;color:#000">0214164165</div>
<div class="a t" style="left:295px;top:302px;color:#000">3</div>
<div class="a t" style="left:413px;top:302px;color:#000">0.9899</div>
<div class="a t" style="left:531px;top:302px;color:#000">20.01</div>
<div class="a t" style="left:645px;top:302px;color:#000">1.4781</div>
<div class="a t" style="left:768px;top:302px;color:#000">100.13</div>
<div class="a t" style="left:810px;top:302px;color:#000">-0.25</div>
<div class="a t" style="left:852px;top:302px;color:#000">1.31</div>
<div class="a t" style="left:894px;top:302px;color:#000">Givaudan</div>
<div class="a t" style="left:45px;top:324px;color:#000">2025-03-26 14:26:18</div>
<div class="a t" style="left:152px;top:324px;color:#000">0214163151</div>
<div class="a t" style="left:295px;top:324px;color:#000">2</div>
<div class="a t" style="left:413px;top:324px;color:#000">1.0028</div>
<div class="a t" style="left:531px;top:324px;color:#000">20.03</div>
<div class="a t" style="left:645px;top:324px;color:#000">1.4565</div>
<div class="a t" style="left:768px;top:324px;color:#000">99.93</div>
<div class="a t" style="left:810px;top:324px;color:#000">-0.5</div>
<div class="a t" style="left:852px;top:324px;color:#000">1.95</div>
<div class="a t" style="left:894px;top:324px;color:#000">Givaudan</div>
<div class="a t" style="left:45px;top:346px;color:#000">2025-03-26 14:18:23</div>
<div class="a t" style="left:152px;top:346px;color:#000">0214163483</div>
<div class="a t" style="left:295px;top:346px;color:#000">1</div>
<div class="a t" style="left:413px;top:346px;color:#000">0.9801</div>
<div class="a t" style="left:531px;top:346px;color:#000">20.03</div>
<div class="a t" style="left:645px;top:346px;color:#000">1.4765</div>
<div class="a t" style="left:768px;top:346px;color:#000">99.96</div>
<div class="a t" style="left:810px;top:346px;color:#000">-0.83</div>
<div class="a t" style="left:852px;top:346px;color:#000">2.96</div>
<div class="a t" style="left:894px;top:346px;color:#000">Givaudan</div>
<div class="a t" style="left:45px;top:368px;color:#000">2025-03-26 14:10:30</div>
<div class="a t" style="left:152px;top:368px;color:#000">0214164510</div>
<div class="a t" style="left:295px;top:368px;color:#000">35</div>
<div class="a t" style="left:413px;top:368px;color:#000">0.999</div>
<div class="a t" style="left:531px;top:368px;color:#000">20.02</div>
<div class="a t" style="left:645px;top:368px;color:#000">1.4701</div>
<div class="a t" style="left:768px;top:368px;color:#000">100.06</div>
<div class="a t" style="left:810px;top:368px;color:#000">-0.24</div>
<div class="a t" style="left:852px;top:368px;color:#000">1.56</div>
<div class="a t" style="left:894px;top:368px;color:#000">Givaudan</div>
<div class="a t" style="left:45px;top:390px;color:#000">2025-03-26 14:02:35</div>
<div class="a t" style="left:152px;top:390px;color:#000">0214165809</div>
<div class="a t" style="left:295px;top:390px;color:#000">34</div>
<div class="a t" style="left:413px;top:390px;color:#000">0.9887</div>
<div class="a t" style="left:531px;top:390px;color:#000">20.02</div>
<div class="a t" style="left:645px;top:390px;color:#000">1.4705</div>
<div class="a t" style="left:768px;top:390px;color:#000">99.74</div>
<div class="a t" style="left:810px;top:390px;color:#000">-12.09</div>
<div class="a t" style="left:852px;top:390px;color:#000">26.51</div>
<div class="a t" style="left:894px;top:390px;color:#000">Givaudan</div>
<div class="a t" style="left:45px;top:412px;color:#000">2025-03-26 13:54:44</div>
<div class="a t" style="left:152px;top:412px;color:#000">0214166229</div>
<div class="a t" style="left:295px;top:412px;color:#000">33</div>
<div class="a t" style="left:413px;top:412px;color:#000">1.0006</div>
<div class="a t" style="left:531px;top:412px;color:#000">20.04</div>
<div class="a t" style="left:645px;top:412px;color:#000">1.4585</div>
<div class="a t" style="left:768px;top:412px;color:#000">96.14</div>
<div class="a t" style="left:810px;top:412px;color:#000">-4.6</div>
<div class="a t" style="left:852px;top:412px;color:#000">16.95</div>
<div class="a t" style="left:894px;top:412px;color:#000">Givaudan</div>
<div class="a t" style="left:45px;top:434px;color:#000">2025-03-26 13:47:08</div>
<div class="a t" style="left:152px;top:434px;color:#000">0214164619</div>
<div class="a t" style="left:295px;top:434px;color:#000">32</div>
<div class="a t" style="left:413px;top:434px;color:#000">0.9686</div>
<div class="a t" style="left:531px;top:434px;color:#000">20.04</div>
<div class="a t" style="left:645px;top:434px;color:#000">1.4723</div>
<div class="a t" style="left:768px;top:434px;color:#000">99.84</div>
<div class="a t" style="left:810px;top:434px;color:#000">-1.04</div>
<div class="a t" style="left:852px;top:434px;color:#000">3.39</div>
<div class="a t" style="left:894px;top:434px;color:#000">Givaudan</div>
<div class="a t" style="left:45px;top:456px;color:#000">2025-03-26 13:38:12</div>
<div class="a t" style="left:152px;top:456px;color:#000">0214164891</div>
<div class="a t" style="left:295px;top:456px;color:#000">31</div>
<div class="a t" style="left:413px;top:456px;color:#000">0.9243</div>
<div class="a t" style="left:531px;top:456px;color:#000">20.02</div>
<div class="a t" style="left:645px;top:456px;color:#000">1.4717</div>
<div class="a t" style="left:768px;top:456px;color:#000">94.97</div>
<div class="a t" style="left:810px;top:456px;color:#000">-6.26</div>
<div class="a t" style="left:852px;top:456px;color:#000">23.1</div>
<div class="a t" style="left:894px;top:456px;color:#000">Givaudan</div>
<div class="a t" style="left:45px;top:478px;color:#000">2025-03-26 13:30:26</div>
<div class="a t" style="left:152px;top:478px;color:#000">0214166170</div>
<div class="a t" style="left:295px;top:478px;color:#000">30</div>
<div class="a t" style="left:413px;top:478px;color:#000">1.0389</div>
<div class="a t" style="left:531px;top:478px;color:#000">20.01</div>
<div class="a t" style="left:645px;top:478px;color:#000">1.5088</div>
<div class="a t" style="left:768px;top:478px;color:#000">100.23</div>
<div class="a t" style="left:810px;top:478px;color:#000">-0.23</div>
<div class="a t" style="left:852px;top:478px;color:#000">1.34</div>
<div class="a t" style="left:894px;top:478px;color:#000">Givaudan</div>
<div class="a t" style="left:45px;top:500px;color:#000">2025-03-26 13:22:41</div>
<div class="a t" style="left:152px;top:500px;color:#000">0214162833</div>
<div class="a t" style="left:295px;top:500px;color:#000">29</div>
<div class="a t" style="left:413px;top:500px;color:#000">0.9705</div>
<div class="a t" style="left:531px;top:500px;color:#000">20.04</div>
<div class="a t" style="left:645px;top:500px;color:#000">1.465</div>
<div class="a t" style="left:768px;top:500px;color:#000">98.78</div>
<div class="a t" style="left:810px;top:500px;color:#000">-2.61</div>
<div class="a t" style="left:852px;top:500px;color:#000">9.62</div>
<div class="a t" style="left:894px;top:500px;color:#000">Givaudan</div>
<div class="a t" style="left:45px;top:522px;color:#000">2025-03-26 13:15:10</div>
<div class="a t" style="left:152px;top:522px;color:#000">0214165521</div>
<div class="a t" style="left:295px;top:522px;color:#000">28</div>
<div class="a t" style="left:413px;top:522px;color:#000">0.9998</div>
<div class="a t" style="left:531px;top:522px;color:#000">20.03</div>
<div class="a t" style="left:645px;top:522px;color:#000">1.455</div>
<div class="a t" style="left:768px;top:522px;color:#000">99.07</div>
<div class="a t" style="left:810px;top:522px;color:#000">-2.19</div>
<div class="a t" style="left:852px;top:522px;color:#000">7.41</div>
<div class="a t" style="left:894px;top:522px;color:#000">Givaudan</div>
<div class="a t" style="left:45px;top:544px;color:#000">2025-03-26 13:07:14</div>
<div class="a t" style="left:152px;top:544px;color:#000">0214162292</div>
<div class="a t" style="left:295px;top:544px;color:#000">27</div>
<div class="a t" style="left:413px;top:544px;color:#000">1.0129</div>
<div class="a t" style="left:531px;top:544px;color:#000">20.02</div>
<div class="a t" style="left:645px;top:544px;color:#000">1.4765</div>
<div class="a t" style="left:768px;top:544px;color:#000">99.85</div>
<div class="a t" style="left:810px;top:544px;color:#000">-2.43</div>
<div class="a t" style="left:852px;top:544px;color:#000">7.14</div>
<div class="a t" style="left:894px;top:544px;color:#000">Givaudan</div>
<div class="a t" style="left:45px;top:566px;color:#000">2025-03-26 12:59:19</div>
<div class="a t" style="left:152px;top:566px;color:#000">0214166161</div>
<div class="a t" style="left:295px;top:566px;color:#000">26</div>
<div class="a t" style="left:413px;top:566px;color:#000">0.9765</div>
<div class="a t" style="left:531px;top:566px;color:#000">20.02</div>
<div class="a t" style="left:645px;top:566px;color:#000">1.4743</div>
<div class="a t" style="left:768px;top:566px;color:#000">98.38</div>
<div class="a t" style="left:810px;top:566px;color:#000">-11.48</div>
<div class="a t" style="left:852px;top:566px;color:#000">40.33</div>
<div class="a t" style="left:894px;top:566px;color:#000">Givaudan</div>
<div class="a t" style="left:45px;top:588px;color:#000">2025-03-26 12:51:28</div>
<div class="a t" style="left:152px;top:588px;color:#000">0214165520</div>
<div class="a t" style="left:295px;top:588px;color:#000">25</div>
<div class="a t" style="left:413px;top:588px;color:#000">1.0069</div>
<div class="a t" style="left:531px;top:588px;color:#000">20.01</div>
<div class="a t" style="left:645px;top:588px;color:#000">1.5249</div>
<div class="a t" style="left:768px;top:588px;color:#000">100.24</div>
<div class="a t" style="left:810px;top:588px;color:#000">-1.95</div>
<div class="a t" style="left:852px;top:588px;color:#000">4.97</div>
<div class="a t" style="left:894px;top:588px;color:#000">Givaudan</div>
<div class="a t" style="left:45px;top:610px;color:#000">2025-03-26 12:43:52</div>
<div class="a t" style="left:152px;top:610px;color:#000">0214165057</div>
<div class="a t" style="left:295px;top:610px;color:#000">24</div>
<div class="a t" style="left:413px;top:610px;color:#000">1.0219</div>
<div class="a t" style="left:531px;top:610px;color:#000">20.04</div>
<div class="a t" style="left:645px;top:610px;color:#000">1.4772</div>
<div class="a t" style="left:768px;top:610px;color:#000">99.82</div>
<div class="a t" style="left:810px;top:610px;color:#000">-0.9</div>
<div class="a t" style="left:852px;top:610px;color:#000">2.62</div>
<div class="a t" style="left:894px;top:610px;color:#000">Givaudan</div>
<div class="a" style="left:1161px;top:0;width:17px;height:624px;background:#f0f0f0"></div>
<div class="a" style="left:1169px;top:17px;width:2px;height:310px;background:#858585;border-radius:1px"></div>
</div>
</body></html>
